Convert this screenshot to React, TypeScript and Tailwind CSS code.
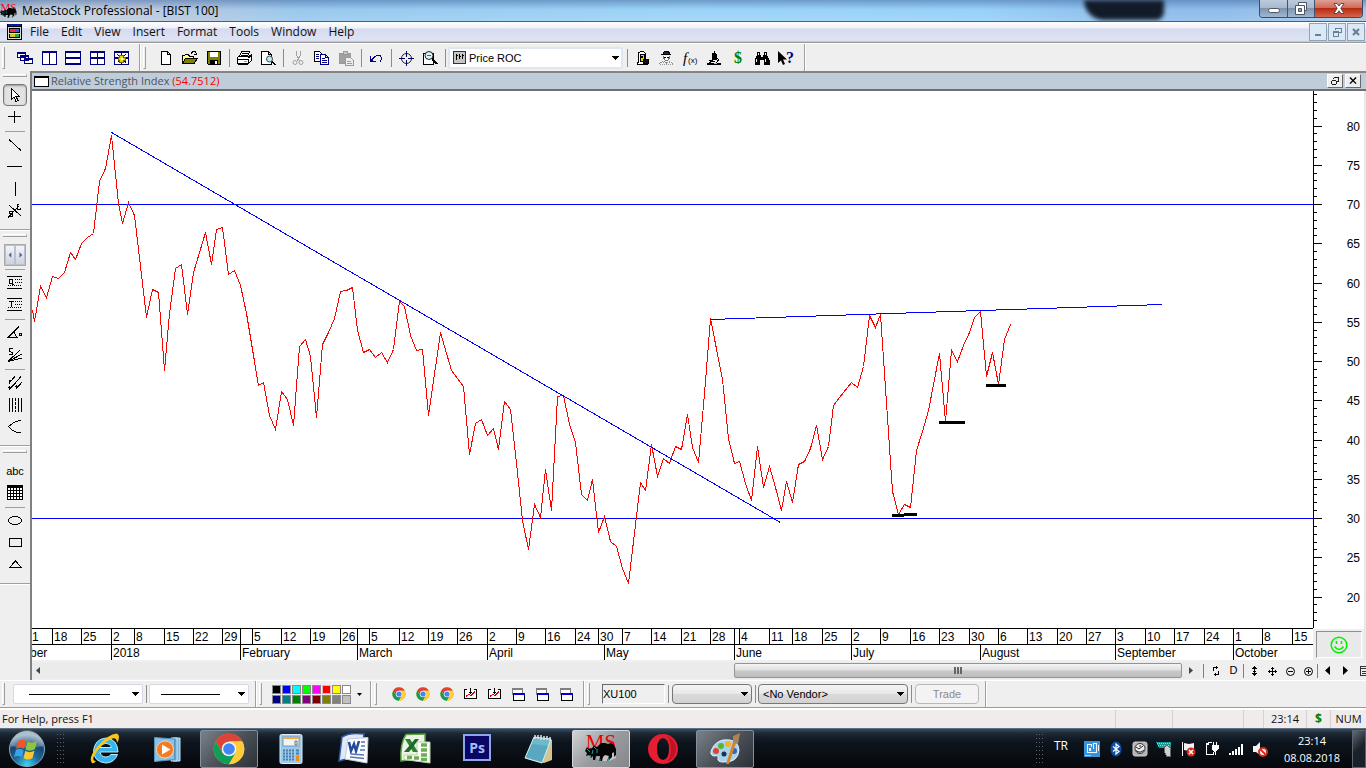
import type { ReactNode } from "react";
import clsx from "clsx";

const RSI_POINTS =
    "32,310 34,321 40,286 46,297 52,276 58,278 64,272 70,252 75,259 81,243 87,237 93,233 99,181 105,168 111,135 118,203 122,223 128,202 134,215 146,317 152,289 158,292 164,370 169,313 175,268 181,264 187,314 193,272 205,232 211,264 216,229 222,227 228,274 234,270 240,285 246,313 258,385 263,382 269,415 275,429 281,391 287,399 293,425 299,346 305,339 310,356 316,417 322,344 328,332 334,318 340,291 346,290 352,287 357,330 363,352 369,349 375,357 381,352 387,362 393,349 399,301 404,306 410,335 416,350 422,349 428,415 440,332 451,370 457,378 463,386 469,454 475,423 481,419 487,435 493,428 498,449 504,401 510,409 516,463 522,520 528,549 534,504 540,517 545,469 551,510 557,396 563,395 569,424 575,442 581,494 587,500 592,479 598,532 604,516 610,541 616,546 622,568 628,583 640,482 645,490 651,444 657,476 663,458 669,463 675,446 681,449 687,414 692,447 698,462 704,393 710,318 722,379 728,438 734,463 739,461 745,483 751,500 757,446 763,487 769,466 775,487 781,510 786,481 792,502 798,464 804,461 810,448 816,425 822,459 828,446 833,405 839,397 851,382 857,387 863,366 869,315 875,327 880,314 892,491 898,514 904,504 910,507 916,450 922,431 928,410 939,353 945,421 951,350 957,361 963,345 969,332 974,317 980,311 986,376 992,352 998,384 1004,339 1010,324";

const DAYS: [number, string][] = [
    [52, "18"], [81, "25"], [111, "2"], [134, "8"], [164, "15"], [193, "22"], [222, "29"], [240, ""], [252, "5"],
    [281, "12"], [310, "19"], [340, "26"], [357, ""], [369, "5"], [399, "12"], [428, "19"], [457, "26"], [487, "2"],
    [516, "9"], [545, "16"], [575, "24"], [598, "30"], [622, "7"], [651, "14"], [681, "21"], [710, "28"], [734, ""],
    [739, "4"], [769, "11"], [792, "18"], [822, "25"], [851, "2"], [880, "9"], [910, "16"], [939, "23"], [969, "30"],
    [998, "6"], [1027, "13"], [1057, "20"], [1086, "27"], [1115, "3"], [1145, "10"], [1174, "17"], [1204, "24"],
    [1233, "1"], [1262, "8"], [1292, "15"],
];

const MONTHS: [number, string][] = [
    [111, "2018"], [240, "February"], [357, "March"], [487, "April"], [604, "May"], [734, "June"], [851, "July"],
    [980, "August"], [1115, "September"], [1233, "October"],
];

const MENUS = ["File", "Edit", "View", "Insert", "Format", "Tools", "Window", "Help"];

const SWATCHES = [
    "#000000", "#0000ff", "#00ffff", "#00ff00", "#ff00ff", "#ff0000", "#ffff00", "#ffffff",
    "#000080", "#008080", "#008000", "#800080", "#800000", "#808000", "#808080", "#c0c0c0",
];

const ui = "font-['Open_Sans','Noto_Sans',sans-serif]";
const arial = "font-['Liberation_Sans',Arial,sans-serif]";

/** 16x16 canvas for the small toolbar drawings. */
function Ico({ children, stroke = "#000", smooth = false }: { children: ReactNode; stroke?: string; smooth?: boolean }) {
    return (
        <svg width="16" height="16" viewBox="0 0 16 16" fill="none" stroke={stroke} shapeRendering={smooth ? "auto" : "crispEdges"} aria-hidden="true">
            {children}
        </svg>
    );
}

function Tool({ label, children, className }: { label: string; children: ReactNode; className?: string }) {
    return (
        <button type="button" aria-label={label} className={clsx("flex h-[22px] w-6 shrink-0 items-center justify-center", className)}>
            {children}
        </button>
    );
}

function Sep() {
    return (
        <span className="flex w-1.5 shrink-0 justify-center">
            <span className="h-[18px] w-px bg-[#8c8c8c]" />
        </span>
    );
}

function Grip({ className }: { className?: string }) {
    return <span className={clsx("h-[22px] w-[3px] shrink-0 border-r border-b border-l border-l-white border-r-[#a0a0a0] border-b-[#a0a0a0]", className)} />;
}

function Divider({ className }: { className?: string }) {
    return <span className={clsx("w-0.5 shrink-0 self-stretch border-r border-l border-l-[#a0a0a0] border-r-white", className)} />;
}

function Caret({ className }: { className?: string }) {
    return (
        <svg width="7" height="4" viewBox="0 0 7 4" className={clsx("pointer-events-none", className)} shapeRendering="crispEdges">
            <path d="M0 0H7V1H6V2H5V3H4V4H3V3H2V2H1V1H0Z" fill="#000" />
        </svg>
    );
}

/* ---------- coloured artwork ---------- */

function Chrome({ size }: { size: number }) {
    return (
        <svg width={size} height={size} viewBox="0 0 48 48" aria-hidden="true">
            <circle cx="24" cy="24" r="23" fill="#fbcc34" />
            <path d="M4 12.500A23 23 0 0 1 44 12.500H24L14 29.500Z" fill="#db4437" />
            <path d="M4.100 12.500A23 23 0 0 0 24 47L34 29.500L14 29.500Z" fill="#0f9d58" />
            <path d="M24 13H44.200A23 23 0 0 1 24 47L34 30Z" fill="#fdcd3c" />
            <circle cx="24" cy="24" r="11" fill="#f4f4f4" />
            <circle cx="24" cy="24" r="8.700" fill="#4285f4" />
        </svg>
    );
}

function Bull({ width, height }: { width: number; height: number }) {
    return (
        <svg width={width} height={height} viewBox="0 -5 32 37" aria-hidden="true">
            <text x="16" y="14" textAnchor="middle" fontFamily="Liberation Serif, serif" fontSize="21" fill="#f00000">MS</text>
            <path d="M12 23L20 19L31 18L31 23L24 26H15Z" fill="#c4c4c4" />
            <path d="M0 16L2 12L4 14L7 13L9 11L12 12L16 8L20 8L23 9L26 8L29 10L31 14L31 20L29 22L29 17L27 18L27 22L24 25L22 26L24 21L20 20L18 22L17 26L14 26L15 21L11 21L10 25L8 25L8 21L6 23L4 20L1 21L2 18Z" fill="#050505" />
            <path d="M2 14L5 17M8 15L7 19M12 14V18M5 20L6 23M15 24V26M24 23L23 26M9 12L11 14" stroke="#18a0a4" strokeWidth="1" fill="none" />
        </svg>
    );
}

function StartOrb() {
    return (
        <svg width="40" height="40" viewBox="0 0 40 40" aria-hidden="true">
            <defs>
                <radialGradient id="orb" cx="50%" cy="95%" r="85%">
                    <stop offset="0" stopColor="#3fd4f4" />
                    <stop offset=".4" stopColor="#1d6c9c" />
                    <stop offset=".75" stopColor="#17456f" />
                    <stop offset="1" stopColor="#8aa9bd" />
                </radialGradient>
            </defs>
            <circle cx="20" cy="20" r="18.500" fill="#17222c" />
            <circle cx="20" cy="20" r="17.500" fill="url(#orb)" stroke="#84a7bb" />
            <path d="M4 17A16 16 0 0 1 36 17Q20 20 4 17Z" fill="#fff" opacity=".28" />
            <path d="M11 13Q15 9 19 12L17 20Q13 17 9 20Z" fill="#f0562a" />
            <path d="M20.500 12.500Q25 15 30 12L28 20Q23 23 18.500 20.500Z" fill="#8cc63f" />
            <path d="M9 21Q13 18.500 16.500 21.500L15 28Q11 26 7 28Z" fill="#38a4e8" />
            <path d="M18.300 22Q23 24.500 27.500 21.500L25.500 29Q21 32 16.500 29Z" fill="#fdc82f" />
        </svg>
    );
}

function ExplorerIcon() {
    return (
        <svg width="32" height="32" viewBox="0 0 32 32" aria-hidden="true">
            <path d="M29 19H11Q12 24 17 24Q20 24 22 21.500H28.500Q25 30 17 30Q4.500 29 4.500 17.500Q6 6 17 5Q28.500 6 29 19ZM11 14.500H22.500Q21.500 10.500 17 10.300Q12 10.500 11 14.500Z" fill="#39b5ee" stroke="#b5ecff" strokeWidth="1" />
            <path d="M3 30Q-1 25 8 14Q19 1 28 .5Q32 3 28 10Q28 3.500 22 6Q12 11 5 23Q3 28 7 28Q4.500 31 3 30Z" fill="#fbc617" />
        </svg>
    );
}

function MediaIcon() {
    return (
        <svg width="32" height="32" viewBox="0 0 32 32" aria-hidden="true">
            <path d="M22 5H29V28H22Z" fill="#7fb9df" stroke="#c9e6f7" />
            <path d="M20 5H26V28H20Z" fill="#5da6d5" stroke="#c9e6f7" />
            <path d="M3.500 4.500L23.500 6V26.500L3.500 28.500Z" fill="#86c3e6" stroke="#5a93b8" />
            <circle cx="14" cy="16.500" r="8.500" fill="#f47b20" stroke="#fbd0a8" />
            <path d="M11 11.500L19.500 16.500L11 21.500Z" fill="#fff" />
        </svg>
    );
}

function CalcIcon() {
    return (
        <svg width="32" height="32" viewBox="0 0 32 32" aria-hidden="true">
            <rect x="5" y="1.500" width="22" height="29" rx="1.500" fill="#9cc9e8" stroke="#dceffa" />
            <rect x="8" y="4" width="16" height="9" fill="#f3f5f2" stroke="#6d9cc0" />
            <rect x="8" y="4" width="16" height="2" fill="#f5a54a" />
            <path d="M20 8H22V12H20Z" stroke="#555" fill="none" strokeWidth=".8" />
            <path d="M8 17.500H20M8 20.500H20M8 23.500H20M8 26.500H20" stroke="#477fab" strokeWidth="2" strokeDasharray="2 1" />
            <path d="M21 17.500H24M21 20.500H24" stroke="#477fab" strokeWidth="2" />
            <path d="M22.500 22.500V28" stroke="#f08a1c" strokeWidth="3" />
        </svg>
    );
}

function WordIcon() {
    return (
        <svg width="32" height="32" viewBox="0 0 32 32" aria-hidden="true">
            <path d="M5 4Q13 -1 27 1L24 25Q10 25 2 28Z" fill="#dfe9f8" stroke="#2f58a4" strokeWidth="1.500" />
            <path d="M11 6L31 4.500L30 30L8 26Z" fill="#fdfdfd" stroke="#bccbe0" />
            <path d="M12 9L14 18L17 11L19 18L22 8" fill="none" stroke="#244a9b" strokeWidth="2.500" />
            <path d="M24 9H28M24 13H28M23 17H28M14 21L27 22M13 24L27 25.500" stroke="#5276b8" strokeWidth="1.600" />
        </svg>
    );
}

function ExcelIcon() {
    return (
        <svg width="32" height="32" viewBox="0 0 32 32" aria-hidden="true">
            <path d="M7 1.500L26 1V25L2 28Q1 10 7 1.500Z" fill="#e9f5e2" stroke="#58a441" strokeWidth="1.500" />
            <path d="M18 9H31V30L5 26.500V22H18Z" fill="#fcfff8" stroke="#b9d3ae" />
            <path d="M22 12H28M22 17H28M22 22H28M8 24.500H13M15 25H20M22 26.500H28" stroke="#6cad56" strokeWidth="3.500" />
            <path d="M6 6H11L19 19H14Z" fill="#2f8138" />
            <path d="M16 6H20L10 19H5Z" fill="#1f6a2b" />
        </svg>
    );
}

function PhotoshopIcon() {
    return (
        <svg width="32" height="32" viewBox="0 0 32 32" aria-hidden="true">
            <rect x="3" y="2" width="26" height="25" fill="#0b0663" stroke="#8ea5ea" strokeWidth="2" />
            <text x="16" y="20" textAnchor="middle" fontFamily="Open Sans, sans-serif" fontWeight="700" fontSize="14" fill="#a3bdf7">Ps</text>
        </svg>
    );
}

function NotepadIcon() {
    return (
        <svg width="32" height="32" viewBox="0 0 32 32" aria-hidden="true">
            <path d="M12 4L29 7V27L21 30L3 25Z" fill="#d2c690" />
            <path d="M11 4L28 6L19 30L2 25Z" fill="#6eb9cc" stroke="#ddf3f8" />
            <path d="M9 11L25 13L19 29L3 24Z" fill="#3c94b2" opacity=".45" />
            <path d="M12 2V6M15 2V6M18 2V7M21 3V7M24 3V7M27 4V8" stroke="#e0e0e0" strokeWidth="1.500" />
        </svg>
    );
}

function OperaIcon() {
    return (
        <svg width="32" height="32" viewBox="0 0 32 32" aria-hidden="true">
            <path fillRule="evenodd" d="M16 1A15 15 0 1 0 16 31A15 15 0 1 0 16 1ZM16 5Q22 6 22 16Q22 26 16 27Q10 26 10 16Q10 6 16 5Z" fill="#e71d32" />
            <path d="M20 3Q29 7 29 16Q29 25 20 29Q24 24 24 16Q24 8 20 3Z" fill="#a70c1d" opacity=".6" />
        </svg>
    );
}

function PaintIcon() {
    return (
        <svg width="32" height="32" viewBox="0 0 32 32" aria-hidden="true">
            <path d="M14 7Q29 5 30 17Q29 30 14 29Q8 29 9 25Q10 22 5 23Q0 22 3 16Q6 9 14 7Z" fill="#a9d3ec" stroke="#e2f3fc" />
            <circle cx="7" cy="18" r="3" fill="#e0442a" />
            <circle cx="12" cy="13" r="3" fill="#5cb531" />
            <circle cx="19" cy="11" r="3" fill="#f3b229" />
            <circle cx="15" cy="21" r="2.500" fill="#17344e" />
            <circle cx="25" cy="18" r="3" fill="#2d66c6" />
            <path d="M24 9L27 10L20 31L17 31Z" fill="#d98426" />
            <path d="M24 3L31 0L29 11L24 10Z" fill="#a98458" />
        </svg>
    );
}

/* ---------- chrome of the window ---------- */

function TitleBar() {
    return (
        <header className="relative flex h-[22px] shrink-0 items-stretch overflow-hidden border-b border-[#4c5f78] bg-[linear-gradient(180deg,rgba(70,110,165,.55)_0,rgba(160,205,240,0)_45%,rgba(255,255,255,.12)_100%),linear-gradient(90deg,#aebfd2_0,#c9d2df_4%,#b4c7df_14%,#98c8ee_22%,#9bd3f7_50%,#97d0f8_72%,#8dbdec_82%,#8fbcea_90%,#a9c8e8_100%)]">
            <span className="absolute top-0 right-[202px] h-5 w-[80px] rounded-bl-[20px] rounded-br-lg bg-[#121c28] blur-[2px]" />
            <div className="flex items-center">
                <span className="w-[17px]"><Bull width={17} height={20} /></span>
                <h1 className="ml-1 pl-px text-xs text-black">MetaStock Professional - [BIST 100]</h1>
            </div>
            <div className="relative mr-[3px] ml-auto flex h-[18px] overflow-hidden rounded-b border border-t-0 border-[#384c66]">
                <button type="button" aria-label="Minimize" className="flex w-[28px] items-end justify-center border-r border-[#42536b] bg-[linear-gradient(#bccbdc,#a8b9cd_45%,#8094ae_50%,#9eb8d2)] pb-1">
                    <span className="h-[5px] w-3 rounded-sm border border-[#4d5563] bg-white" />
                </button>
                <button type="button" aria-label="Restore" className="flex w-[27px] items-center justify-center border-r border-[#42536b] bg-[linear-gradient(#bccbdc,#a8b9cd_45%,#8094ae_50%,#9eb8d2)]">
                    <svg width="13" height="13" viewBox="0 0 13 13" fill="#fff" stroke="#4d5563">
                        <path d="M3.500 .5H11.500V8.500H3.500Z" />
                        <path d="M.5 3.500H9.500V12.500H.5Z" />
                        <path d="M3.500 6.500H6.500V9.500H3.500Z" fill="#8fa3bb" />
                    </svg>
                </button>
                <button type="button" aria-label="Close" className="flex w-[47px] items-center justify-center bg-[linear-gradient(#dda094,#cf6b58_45%,#ba2a11_50%,#d2664c)]">
                    <svg width="12" height="11" viewBox="0 0 12 11">
                        <path d="M1 .5H4L6 3L8 .5H11L7.800 5.300L11 10.500H8L6 7.700L4 10.500H1L4.200 5.300Z" fill="#fff" stroke="#4d3f4a" strokeWidth=".9" />
                    </svg>
                </button>
            </div>
        </header>
    );
}

function MenuBar() {
    const box = "flex h-[18px] w-[18px] items-center justify-center border border-[#8da3ba] bg-[#dbe8f6]";
    return (
        <nav className="flex h-[21px] shrink-0 items-center border-b border-[#9a9a9a] bg-[linear-gradient(#ffffff_0,#eef0f8_30%,#d5daee_35%,#dfe4f5_92%,#b4bdd2_100%)] pl-[7px] text-xs text-[#111]">
            <svg width="15" height="16" viewBox="0 0 15 16" shapeRendering="crispEdges" aria-hidden="true">
                <rect width="15" height="16" fill="#000" />
                <rect x="1" y="0" width="13" height="2" fill="#0a1e9a" />
                <rect x="1" y="3" width="13" height="12" fill="#d8d8d8" />
                <rect x="2" y="4" width="11" height="5" fill="#000" />
                <rect x="3" y="5" width="5" height="3" fill="#f0285a" />
                <rect x="8" y="5" width="4" height="3" fill="#3b58f0" />
                <rect x="2" y="10" width="11" height="4" fill="#000" />
                <rect x="3" y="10" width="5" height="3" fill="#d4c820" />
                <rect x="8" y="10" width="4" height="3" fill="#2ba83a" />
            </svg>
            <div className="ml-2 flex gap-3">
                {MENUS.map((m) => (
                    <button key={m} type="button">{m}</button>
                ))}
            </div>
            <div className="mr-px ml-auto flex gap-px">
                <button type="button" aria-label="Minimize chart" className={box}>
                    <Ico stroke="#6b7f96"><path d="M5 11H11" strokeWidth="2" /></Ico>
                </button>
                <button type="button" aria-label="Restore chart" className={box}>
                    <Ico stroke="#6b7f96"><path d="M6.500 6V4.500H12.500V8.500H10M6 4H13M4.500 7.500H9.500V12.500H4.500ZM4 8.500H10" /></Ico>
                </button>
                <button type="button" aria-label="Close chart" className={box}>
                    <Ico stroke="#6b7f96" smooth><path d="M5 5L11 11M11 5L5 11" strokeWidth="2.200" /></Ico>
                </button>
            </div>
        </nav>
    );
}

function MainToolbar() {
    return (
        <div role="toolbar" aria-label="Standard" className="flex h-7 shrink-0 items-center border-t border-white bg-[#efefef]">
            <Grip className="ml-0.5" />
            <div className="ml-2 flex items-center">
                <Tool label="Cascade">
                    <Ico stroke="#000080"><path fill="#fff" d="M.5 2.500H8.500V7.500H.5ZM3.500 5.500H11.500V10.500H3.500ZM7.500 8.500H15.500V13.500H7.500Z" /><path d="M0 3H9M3 6H12M7 9H16" strokeWidth="2" /></Ico>
                </Tool>
                <Tool label="Tile columns">
                    <Ico stroke="#000080"><path fill="#fff" d="M1.500 1.500H15.500V14.500H1.500ZM8.500 2V14" /><path d="M1 2H16" strokeWidth="2" /></Ico>
                </Tool>
                <Tool label="Tile rows">
                    <Ico stroke="#000080"><path fill="#fff" d="M.5 1.500H15.500V14.500H.5Z" /><path d="M0 2H16M0 8H16" strokeWidth="2" /><path d="M0 13.500H16" /></Ico>
                </Tool>
                <Tool label="Tile grid">
                    <Ico stroke="#000080"><path fill="#fff" d="M1.500 1.500H15.500V14.500H1.500ZM8.500 2V14" /><path d="M1 2H16M1 8H16" strokeWidth="2" /></Ico>
                </Tool>
                <Tool label="Layout options">
                    <Ico stroke="#000080"><path fill="#fff" d="M1.500 1.500H15.500V14.500H1.500Z" /><path d="M1 2H16M1 8H16" strokeWidth="2" /><path d="M8.500 3V14M4.500 4.500L13 12.500M12.500 4.500L4.500 12.500M4 8.500H14" stroke="#000" /><path d="M6.500 5.500H10.500V7H12V10H10.500V12H6.500V10H5V7H6.500Z" fill="#e4d800" stroke="#6e6600" /><path d="M7.500 8.500H9.500" stroke="#fff" strokeWidth="2" /></Ico>
                </Tool>
            </div>
            <Divider className="ml-1.5" />
            <Grip className="ml-0.5" />
            <div className="ml-2 flex items-center">
                <Tool label="New">
                    <Ico><path fill="#fff" d="M3.500 1.500H9.500L12.500 4.500V14.500H3.500ZM9.500 1.500V4.500H12.500" /></Ico>
                </Tool>
                <Tool label="Open">
                    <Ico><path d="M.5 13.500V5.500H2.500L3.500 4.500H6.500L7.500 6.500H11.500V8.500" fill="#ffff80" /><path d="M.5 13.500L3.500 8.500H15.500L12 13.500Z" fill="#808000" /><path d="M9 3.500L11 1.500H13L14.500 3.500V5M12 4.500H15" /></Ico>
                </Tool>
                <Tool label="Save">
                    <Ico><path d="M1.500 1.500H14.500V14.500H2.500L1.500 13.500Z" fill="#808000" /><path d="M4 2H12V7H4Z" fill="#fff" stroke="none" /><path d="M4 9.500H12V14H4Z" fill="#000" stroke="none" /><path d="M9 10.500H11V13.500H9Z" fill="#fff" stroke="none" /></Ico>
                </Tool>
                <Sep />
                <Tool label="Print">
                    <Ico><path fill="#fff" d="M5.500 1.500H13.500L11.500 6.500H3.500ZM1.500 7.500L3.500 6H13.500L15.500 5V10.500L12.500 13.500H1.500Z" /><path d="M6 3.500H12M5 5H11M1 9.500H13M12.500 8L15 6M12.500 13V9M2 14.500H12" /><path d="M8 11.500H11" stroke="#b8a800" /></Ico>
                </Tool>
                <Tool label="Print preview">
                    <Ico><path fill="#fff" d="M1.500 1.500H8.500L11.500 4.500V14.500H1.500ZM8.500 1.500V4.500H11.500" /><circle cx="9.500" cy="9" r="3" fill="#b9ecf4" stroke="#444" shapeRendering="auto" /><path d="M12 11.500L15.500 15" strokeWidth="2" /></Ico>
                </Tool>
                <Sep />
                <Tool label="Cut">
                    <Ico stroke="#a0a0a0"><path d="M6.500 1V5L9.500 11M10.500 1V5L7 11" /><circle cx="5" cy="12.500" r="2" shapeRendering="auto" /><circle cx="11" cy="12.500" r="2" shapeRendering="auto" /></Ico>
                </Tool>
                <Tool label="Copy">
                    <Ico stroke="#000080"><path fill="#fff" stroke="#000" d="M.5 1.500H5.500L8.500 4.500V11.500H.5Z" /><path fill="#fff" d="M6.500 4.500H11.500L14.500 7.500V14.500H6.500ZM11.500 4.500V7.500H14.500" /><path d="M8 8.500H11M8 10.500H13M8 12.500H13M2 4.500H5M2 6.500H5M2 8.500H5" /></Ico>
                </Tool>
                <Tool label="Paste">
                    <Ico stroke="#9a9a9a"><path d="M1.500 3.500H12.500V13.500H1.500Z" fill="#a0a0a0" /><path d="M5 1.500H9V4.500H5Z" fill="#c8c8c8" /><path d="M7.500 7.500H12.500L15.500 10.500V15.500H7.500Z" fill="#eee" /><path d="M9 11.500H13M9 13.500H14" /></Ico>
                </Tool>
                <Sep />
                <Tool label="Undo">
                    <Ico stroke="#000080"><path d="M2.500 6V11.500H7.500M3 10.500L7 6.500L9 5.500H12L13.500 7.500V9.500L12 11.500" /><path d="M2 8L6 12H2Z" fill="#000080" stroke="none" /></Ico>
                </Tool>
                <Sep />
                <Tool label="Crosshair">
                    <Ico stroke="#000060"><circle cx="8.500" cy="8.500" r="5" stroke="#222" shapeRendering="auto" /><path d="M8.500 1V7M8.500 10V16M1 8.500H7M10 8.500H16" /></Ico>
                </Tool>
                <Tool label="Zoom page">
                    <Ico><path fill="#fff" d="M1.500 3.500H11.500V14.500H1.500Z" /><circle cx="7" cy="5.500" r="4" fill="#d8f4f4" stroke="#222" shapeRendering="auto" /><path d="M5 5.500H9" stroke="#008080" /><path d="M10 8.500L15 14" strokeWidth="2" /></Ico>
                </Tool>
                <Sep />
            </div>
            <div className="relative mr-px flex items-center">
                <select aria-label="Indicator" className={clsx("h-[22px] w-[175px] appearance-none rounded-xs border-2 border-[#e0e6f0] bg-white pl-[19px] text-[11px] leading-4", arial)}>
                    <option>Price ROC</option>
                </select>
                <svg className="pointer-events-none absolute left-[5px]" width="13" height="13" viewBox="0 0 13 13" shapeRendering="crispEdges">
                    <path d="M.5 .5H12.500V12.500H.5Z" fill="#c6c6c6" stroke="#333" />
                    <path d="M3.500 3V9M6.500 3V8M9.500 3V8M3 4.500H5M6 5.500H8M9 4.500H11" stroke="#000" />
                </svg>
                <Caret className="absolute right-1" />
            </div>
            <Sep />
            <div className="flex items-center">
                <Tool label="Expert advisor">
                    <Ico><path d="M4.500 12V3L6.500 1.500H9.500L11.500 3.500V10L13.500 12.500V14.500H3.500V12Z" fill="#fff" /><path d="M6 4H10V11H6Z" fill="#e8d800" stroke="#000" /><path d="M7 6.500H9" strokeWidth="2" /><path d="M9 9.500H14.500V13.500H9Z" fill="#111" /></Ico>
                </Tool>
                <Tool label="System tester">
                    <Ico><path d="M5.500 4V2.500L7 1.500H9.500L11.500 2.500V4M3 4.500H13" fill="#1c2550" /><path d="M5.500 6V8L7.500 10.500H9.500L11.500 8V6" fill="#fff" stroke="#777" /><path d="M6 7.500H8M9 7.500H11" /><path d="M1.500 14.500L2.500 12.500L6 11.500L8.500 13L11 11.500L14.500 12.500L15 14.500" stroke="#888" strokeDasharray="1 1" /><path d="M2 14.500H15M3 12.500H14" stroke="#999" strokeDasharray="1 1" /></Ico>
                </Tool>
                <Tool label="Indicator builder">
                    <svg width="16" height="18" viewBox="0 0 16 18" aria-hidden="true">
                        <text x="1" y="14" fontFamily="Liberation Serif, serif" fontStyle="italic" fontSize="15">f</text>
                        <text x="6" y="14" fontFamily="Liberation Sans, sans-serif" fontSize="8">(x)</text>
                    </svg>
                </Tool>
                <Tool label="Explorer">
                    <Ico><path d="M8.500 1V3M7 3.500H10L10.500 7V9.500H6.500V6Z" fill="#000" /><path d="M6.500 10L3.500 13M3 10.500H7M11.500 8L12.500 10L10 13M6 11.500H9" /><path d="M1 14H15" strokeWidth="2" /><path d="M8 13.500H11" stroke="#d8d000" /></Ico>
                </Tool>
                <Tool label="Quotes" className="text-base font-bold text-[#008000]">
                    <span className="font-['Liberation_Serif',serif] leading-4">$</span>
                </Tool>
                <Tool label="Find">
                    <Ico><path d="M3 2H6V5H7V7H9V5H10V2H13V5L15.500 10V14.500H10V10H6V14.500H.5V10L3 5Z" fill="#000" stroke="none" /><path d="M4.500 3V5M11.500 3V5M2.500 9V12M11.500 9V12" stroke="#eee" /></Ico>
                </Tool>
                <Tool label="Context help">
                    <svg width="18" height="16" viewBox="0 0 18 16" aria-hidden="true">
                        <path d="M1 1V13L4 10.500L6 15L8 14L6 9.500H10Z" fill="#000" />
                        <text x="9" y="13" fontFamily="Liberation Serif, serif" fontWeight="700" fontSize="16" fill="#000080">?</text>
                    </svg>
                </Tool>
            </div>
            <Divider className="ml-1.5" />
        </div>
    );
}

function ToolGroup({ children }: { children: ReactNode }) {
    return (
        <div className="w-full">
            <div className="flex h-[13px] justify-center pt-[3px]">
                <span className="h-[3px] w-6 border-t border-r border-b border-t-white border-r-[#a0a0a0] border-b-[#a0a0a0]" />
            </div>
            <div className="flex flex-col items-center pb-[7px]">{children}</div>
            <div className="h-0.5 border-t border-b border-t-[#a0a0a0] border-b-white" />
        </div>
    );
}

function HSep() {
    return (
        <span className="flex h-1.5 items-center">
            <span className="h-px w-5 bg-[#a0a0a0]" />
        </span>
    );
}

function DrawingTools() {
    return (
        <aside aria-label="Drawing tools" className="w-8 shrink-0 overflow-hidden border-r-2 border-[#808080] bg-[#efefef]">
            <ToolGroup>
                <Tool label="Pointer" className="rounded-sm border border-[#777] bg-[#e2e2e2] shadow-[inset_0_1px_2px_#999]">
                    <Ico><path d="M4.500 1.500V12.500L7 10L9 14.500L11 13.500L9 9.500H12.500Z" fill="#fff" /></Ico>
                </Tool>
                <Tool label="Crosshair pointer"><Ico><path d="M7.500 1.500V14M1 7.500H14" /></Ico></Tool>
                <HSep />
                <Tool label="Trendline"><Ico><path d="M2 2.500L14 13.500" /></Ico></Tool>
                <Tool label="Horizontal line"><Ico><path d="M0 7.500H15" /></Ico></Tool>
                <Tool label="Vertical line"><Ico><path d="M8.500 1V15" /></Ico></Tool>
                <Tool label="Stop loss">
                    <Ico><path d="M1 14.500L12 3M2 2L14 13" /><path d="M10.500 1V6.500H13.500V5M9.500 1.500H12M5.500 8.500H2.500V10.500H5.500V13.500H2" /></Ico>
                </Tool>
            </ToolGroup>
            <ToolGroup>
                <div className="flex h-[22px] w-[22px] items-center border border-[#aaa] bg-[#f4f4f4]">
                    {["M6 4L3 7L6 10Z", "M4 4L7 7L4 10Z"].map((d, i) => (
                        <button key={d} type="button" aria-label={i ? "Next tools" : "Previous tools"} className="flex h-5 w-2.5 items-center justify-center border border-[#bdc0ca] bg-[linear-gradient(#f5f5f8,#cfd1dc)]">
                            <svg width="9" height="14" viewBox="0 0 9 14"><path d={d} fill="#3e5f9d" /></svg>
                        </button>
                    ))}
                </div>
                <HSep />
                <Tool label="Quadrant lines">
                    <Ico><path d="M0 1.500H15M0 13.500H15M2.500 4.500H5.500V8.500H2.500ZM5 9.500H7" /><path d="M8 4.500H15M8 7.500H15M1 10.500H15" strokeDasharray="1 1" /></Ico>
                </Tool>
                <Tool label="Tirone levels">
                    <Ico><path d="M0 1.500H15M0 13.500H15M2 4.500H7M4.500 5V10" /><path d="M8 4.500H15M8 7.500H15M1 10.500H15" strokeDasharray="1 1" /></Ico>
                </Tool>
                <HSep />
                <Tool label="Gann angle">
                    <Ico><path d="M12 1.500L1 12.500H11M7 7L9.500 12M12.500 8.500H14.500V10.500H12.500Z" /></Ico>
                </Tool>
                <Tool label="Speed lines">
                    <Ico><path d="M1 14.500L13 3M1 14.500L15 7M1 14.500L15 11M5.500 1.500H2.500V4L5 5.500V7.500H2" /></Ico>
                </Tool>
                <HSep />
                <Tool label="Andrews pitchfork">
                    <Ico><path d="M3 7L8 1.500M3 14L14 1.500M10 13L15 7M2.500 5V9M5 5.500H2M2.500 11V15M1 12.500H4M8 11.500H11M9.500 10V14" /></Ico>
                </Tool>
                <Tool label="Time zones">
                    <Ico><path d="M2.500 1V15M5.500 1V15M11.500 1V15M14.500 1V15" /><path d="M8.500 1V15" strokeDasharray="3 1" /></Ico>
                </Tool>
                <Tool label="Fibonacci arcs"><Ico><path d="M14 1.500H12L6 4L1.500 7.500L5 11L10 13.500H14" /></Ico></Tool>
            </ToolGroup>
            <ToolGroup>
                <Tool label="Text" className={clsx("text-[11px]", arial)}>abc</Tool>
                <Tool label="Grid">
                    <Ico><path fill="#fff" d="M.5 .5H15.500V14.500H.5Z" /><path d="M0 1.500H16" strokeWidth="2" /><path d="M3.500 1V14M6.500 1V14M9.500 1V14M12.500 1V14M0 5.500H16M0 8.500H16M0 11.500H16" /></Ico>
                </Tool>
                <HSep />
                <Tool label="Ellipse"><Ico><ellipse cx="8" cy="7.500" rx="6.500" ry="4" /></Ico></Tool>
                <Tool label="Rectangle"><Ico><path d="M2.500 3.500H14.500V11.500H2.500Z" /></Ico></Tool>
                <Tool label="Triangle"><Ico><path d="M8.500 4L2.500 10.500H14.500Z" /></Ico></Tool>
            </ToolGroup>
        </aside>
    );
}

/* ---------- chart ---------- */

function scaleY(v: number) {
    return Math.round(518 - (v - 30) * 7.85);
}

function Chart() {
    const values = Array.from({ length: 69 }, (_, i) => 16 + i);
    return (
        <div className={clsx("flex min-h-0 flex-1 bg-white text-xs", arial)}>
            <div className="flex min-w-0 flex-1 flex-col">

                {/* Plot of the indicator with its trendlines. */}
                <svg className="block min-h-0 w-full flex-1" role="img" aria-label="Relative Strength Index" shapeRendering="crispEdges">
                    <path d="M0 113.500H2000M0 427.500H2000" stroke="#0000ff" />
                    <g transform="translate(-31.5 -90.5)" fill="none">
                        <polyline points={RSI_POINTS} stroke="#ff0000" />
                        <path d="M111 132L780 522M710 319L1162 304" stroke="#0000ff" />
                    </g>
                    <path d="M860 424.500H872M872 423.500H885M907 331.500H933M954 294.500H974" stroke="#000" strokeWidth="3" />
                </svg>

                {/* Date axis. */}
                <svg className="block h-8 w-full shrink-0" shapeRendering="crispEdges">
                    <path d="M0 .5H2000M0 16.500H2000" stroke="#000" />
                    <text x="0" y="13">1</text>
                    <text x="-2" y="29">ber</text>
                    {DAYS.map(([x, d]) => (
                        <g key={x}>
                            <path d={`M${x - 31.5} 0V16`} stroke="#000" />
                            <text x={x - 30} y="13">{d}</text>
                        </g>
                    ))}
                    {MONTHS.map(([x, m]) => (
                        <g key={x}>
                            <path d={`M${x - 31.5} 16V32`} stroke="#000" />
                            <text x={x - 30} y="29">{m}</text>
                        </g>
                    ))}
                </svg>
            </div>

            <div className="flex w-[53px] shrink-0 flex-col border-r-2 border-[#e8e8e8]">
                <svg className="block min-h-0 w-full flex-1" shapeRendering="crispEdges">
                    <path d="M.5 0V538" stroke="#000" />
                    {values.map((v) => (
                        <g key={v}>
                            <path d={`M1 ${scaleY(v) - 90.5}H${v % 5 ? 4 : 9}`} stroke="#000" />
                            {v % 5 === 0 && <text x="47" y={scaleY(v) - 86} textAnchor="end">{v}</text>}
                        </g>
                    ))}
                </svg>
                <div className="flex h-8 shrink-0 items-center justify-center border-t border-white bg-[#efefef]">
                    <button type="button" aria-label="Smiley" className="flex h-[27px] w-[46px] items-center justify-center border border-t-[#8f8f8f] border-r-white border-b-white border-l-[#8f8f8f] bg-[#e9e9e9]">
                        <svg width="18" height="18" viewBox="0 0 18 18" fill="none" stroke="#00f000" strokeWidth="1.500">
                            <circle cx="9" cy="9" r="7.800" />
                            <path d="M4.500 10.500Q9 16.500 13.500 10.500M6.500 5V8M11.500 5V8" />
                        </svg>
                    </button>
                </div>
            </div>
        </div>
    );
}

function VSep() {
    return <span className="h-3.5 w-px shrink-0 bg-[#808080]" />;
}

function ScrollRow() {
    const btn = "flex h-4 w-[17px] shrink-0 items-center justify-center";
    return (
        <div className="flex h-5 shrink-0 items-center overflow-hidden bg-[#efefef] pt-px">
            <div className="flex h-[17px] flex-1 items-center bg-[#ebebeb]">
                <button type="button" aria-label="Scroll left" className="flex w-3 justify-center">
                    <svg width="4" height="7" viewBox="0 0 4 7"><path d="M4 0V7L0 3.500Z" fill="#444" /></svg>
                </button>
                <span className="flex-[692]" />
                <button type="button" aria-label="Scroll position" className="flex h-[15px] flex-[448] items-center justify-center gap-px rounded-xs border border-[#949494] bg-[linear-gradient(#f4f4f4,#dedede_48%,#c9c9c9_52%,#bdbdbd)]">
                    <span className="h-[7px] w-0.5 bg-[#666]" />
                    <span className="h-[7px] w-0.5 bg-[#666]" />
                    <span className="h-[7px] w-0.5 bg-[#666]" />
                </button>
                <button type="button" aria-label="Scroll right" className="flex h-4 w-[18px] items-center justify-center">
                    <svg width="4" height="7" viewBox="0 0 4 7"><path d="M0 0V7L4 3.500Z" fill="#444" /></svg>
                </button>
            </div>
            <div className="ml-[3px] flex w-[163px] items-center gap-px">
                <VSep />
                <button type="button" aria-label="Refresh" className={clsx(btn, "ml-0.5")}>
                    <Ico><path d="M5.500 8V4.500H10M8.500 3V6M10.500 8V11.500H6M7.500 10V13" /></Ico>
                </button>
                <button type="button" aria-label="Daily" className={clsx(btn, "text-[11px]", arial)}>D</button>
                <VSep />
                <button type="button" aria-label="Vertical scale" className={btn}>
                    <Ico><path d="M8.500 3V13M7 4.500H10M6 5.500H11M7 11.500H10M6 10.500H11M7 8.500H10" /></Ico>
                </button>
                <button type="button" aria-label="Pan" className={btn}>
                    <Ico><path d="M8.500 4V13M4 8.500H13M7 5.500H10M7 11.500H10M5.500 7V10M11.500 7V10" /></Ico>
                </button>
                <button type="button" aria-label="Zoom out" className={btn}>
                    <Ico smooth><circle cx="8.500" cy="8.500" r="4" /><path d="M6 8.500H11" /></Ico>
                </button>
                <button type="button" aria-label="Zoom in" className={btn}>
                    <Ico smooth><circle cx="8.500" cy="8.500" r="4" /><path d="M6 8.500H11M8.500 6V11" /></Ico>
                </button>
                <VSep />
                <button type="button" aria-label="Previous" className={btn}>
                    <svg width="5" height="9" viewBox="0 0 5 9"><path d="M5 0V9L0 4.500Z" /></svg>
                </button>
                <button type="button" aria-label="Next" className={btn}>
                    <svg width="5" height="9" viewBox="0 0 5 9"><path d="M0 0V9L5 4.500Z" /></svg>
                </button>
                <button type="button" aria-label="Security list" className={btn}>
                    <Ico stroke="#333"><path d="M4.500 3.500H15.500V12.500H4.500ZM4 5.500H16M6 8.500H14M6 10.500H14" /></Ico>
                </button>
            </div>
        </div>
    );
}

function ChartWindow() {
    const box = "flex h-[14px] w-4 items-center justify-center border border-t-white border-r-[#696969] border-b-[#696969] border-l-white bg-[#efefef]";
    return (
        <section className="flex min-w-0 flex-1 flex-col">
            <div className="flex h-5 shrink-0 items-center border-t-2 border-b-2 border-t-[#858585] border-b-[#6f6f6f] bg-[#bfccda] pr-[5px] pl-0.5">
                <span className="h-[11px] w-[15px] border border-t-2 border-black bg-white" />
                <h2 className="ml-0.5 text-[11px] leading-4 text-[#4c5560]">
                    Relative Strength Index <span className="text-[#ff0000]">(54.7512)</span>
                </h2>
                <div className="ml-auto flex gap-0.5">
                    <button type="button" aria-label="Restore pane" className={box}>
                        <Ico><path d="M6.500 6V4.500H12.500V8.500H10M4.500 7.500H9.500V11.500H4.500Z" /></Ico>
                    </button>
                    <button type="button" aria-label="Close pane" className={box}>
                        <Ico smooth><path d="M4.500 4L11.500 11M11.500 4L4.500 11" strokeWidth="1.600" /></Ico>
                    </button>
                </div>
            </div>
            <Chart />
            <ScrollRow />
        </section>
    );
}

/* ---------- bottom bars ---------- */

function LineSelect({ label, className, line }: { label: string; className: string; line: string }) {
    return (
        <div className={clsx("relative flex items-center", className)}>
            <select aria-label={label} className="h-5 w-full appearance-none rounded-xs border border-[#d5dae4] bg-white">
                <option aria-label="Solid" value="solid" />
            </select>
            <span className={clsx("pointer-events-none absolute h-px bg-black", line)} />
            <Caret className="absolute right-1" />
        </div>
    );
}

function DownloadIcon() {
    return (
        <Ico><path d="M4 3.500H1.500V12.500H13.500V3.500H11" fill="#fff" /><path d="M7.500 2V8M6 6.500H9" /><path d="M3 10.500L6 8L8 9.500L12 5.500" stroke="#e00000" /></Ico>
    );
}

function WindowIcon() {
    return (
        <Ico><path d="M1.500 2.500H11.500V8H1.500Z" fill="#fff" stroke="#808080" /><path d="M1 3H12" stroke="#808080" strokeWidth="2" /><path d="M2.500 7.500H13.500V14.500H2.500Z" fill="#fff" /><path d="M2 8H14" stroke="#0000e0" strokeWidth="2" /></Ico>
    );
}

function BottomToolbar() {
    const drop = "h-5 w-full appearance-none rounded-sm border border-[#777] bg-[linear-gradient(#f4f4f4,#e8e8e8_48%,#dadada_52%,#d2d2d2)] pl-1 text-[11px] leading-4";
    return (
        <div role="toolbar" aria-label="Formatting" className="flex h-7 shrink-0 items-center border-t border-t-white border-b border-b-[#9a9a9a] bg-[#efefef]">
            <Grip className="ml-0.5" />
            <LineSelect label="Line style" className="ml-2 w-[130px]" line="left-4 w-[81px]" />
            <Sep />
            <LineSelect label="Line weight" className="w-[100px]" line="left-3 w-[59px]" />
            <Divider className="ml-1.5" />
            <Grip className="ml-0.5" />
            <div className="ml-2.5 grid grid-cols-8 gap-px">
                {SWATCHES.map((c) => (
                    <button
                        key={c}
                        type="button"
                        aria-label={c}
                        className={clsx("h-[9px] w-[9px] border", c === "#ff0000" ? "border-[#e9b4b4]" : "border-[#8a8a8a]")}
                        style={{ backgroundColor: c }}
                    />
                ))}
            </div>
            <button type="button" aria-label="More colors" className="ml-1.5 flex h-5 items-center"><svg width="5" height="3" viewBox="0 0 5 3"><path d="M0 0H5L2.500 3Z" /></svg></button>
            <Divider className="ml-2" />
            <Grip className="ml-0.5" />
            <div className="ml-2.5 flex items-center">
                <Tool label="Web link 1"><Chrome size={14} /></Tool>
                <Tool label="Web link 2"><Chrome size={14} /></Tool>
                <Tool label="Web link 3"><Chrome size={14} /></Tool>
                <Tool label="Download"><DownloadIcon /></Tool>
                <Tool label="Download all"><DownloadIcon /></Tool>
                <Tool label="Window 1"><WindowIcon /></Tool>
                <Tool label="Window 2"><WindowIcon /></Tool>
                <Tool label="Window 3"><WindowIcon /></Tool>
            </div>
            <Divider className="ml-1" />
            <Grip className="ml-0.5" />
            <input aria-label="Symbol" defaultValue="XU100" className={clsx("ml-3 h-5 w-[63px] border border-t-[#696969] border-r-white border-b-white border-l-[#696969] bg-[#efefef] text-[11px]", arial)} />
            <Sep />
            <div className="relative ml-px flex w-20 items-center">
                <select aria-label="Account" className={drop}><option aria-label="None" value="" /></select>
                <Caret className="absolute right-1" />
            </div>
            <Sep />
            <div className="relative flex w-[150px] items-center">
                <select aria-label="Vendor" className={clsx(drop, arial)}><option>&lt;No Vendor&gt;</option></select>
                <Caret className="absolute right-1" />
            </div>
            <Sep />
            <button type="button" disabled className={clsx("ml-px h-5 w-16 rounded-sm border border-[#b5b9bd] bg-[#f3f3f3] text-[11px] text-[#8a8a8a]", arial)}>Trade</button>
            <Divider className="ml-1.5" />
        </div>
    );
}

function StatusBar() {
    return (
        <footer className="flex h-5 shrink-0 items-stretch border-t-2 border-t-white bg-[#f0eceb] text-[11px] leading-4 text-[#111]">
            <span className="flex flex-1 items-center pl-0.5">For Help, press F1</span>
            <span className="w-[57px] border-l border-[#d4d0cf]" />
            <span className="w-[71px] border-l border-[#d4d0cf]" />
            <span className="w-5 border-l border-[#d4d0cf]" />
            <span className="flex w-[43px] items-center justify-center border-l border-[#d4d0cf]">23:14</span>
            <span className="flex w-6 items-center justify-center border-l border-[#d4d0cf] text-xs font-bold text-[#008000]">$</span>
            <span className="flex w-9 items-center justify-center border-l border-[#d4d0cf]">NUM</span>
        </footer>
    );
}

const TASKS: { label: string; icon: ReactNode; state?: "open" | "active" }[] = [
    { label: "Internet Explorer", icon: <ExplorerIcon /> },
    { label: "Media Player", icon: <MediaIcon /> },
    { label: "Chrome", icon: <Chrome size={32} />, state: "open" },
    { label: "Calculator", icon: <CalcIcon /> },
    { label: "Word", icon: <WordIcon /> },
    { label: "Excel", icon: <ExcelIcon /> },
    { label: "Photoshop", icon: <PhotoshopIcon /> },
    { label: "Notepad", icon: <NotepadIcon /> },
    { label: "MetaStock", icon: <Bull width={32} height={37} />, state: "active" },
    { label: "Opera", icon: <OperaIcon /> },
    { label: "Paint", icon: <PaintIcon />, state: "open" },
];

function Dots() {
    return (
        <svg width="8" height="30" viewBox="0 0 8 30" className="shrink-0" shapeRendering="crispEdges" aria-hidden="true">
            <path d="M.5 0V30M3.500 0V30M6.500 0V30" stroke="#59636d" strokeDasharray="1 3" />
        </svg>
    );
}

function Tray() {
    return (
        <div className="ml-3 flex items-center">
            <Tool label="Utility">
                <Ico><path d="M0 0H16V16H0Z" fill="#3993dc" stroke="none" /><path d="M3.500 3V11.500H12.500V2.500H9.500V8M4 3.500H7V6M5 9.500L7 7.500M5 7.500L7 9.500M14.500 4V10" stroke="#eaf6ff" /><path d="M1 14.500H7" stroke="#f1c93d" /></Ico>
            </Tool>
            <Tool label="Bluetooth">
                <Ico smooth><ellipse cx="8" cy="8" rx="5.500" ry="7.500" fill="#0c4fa0" stroke="none" /><path d="M5 5.500L11 10.500L8 13V3L11 5.500L5 10.500" stroke="#fff" strokeWidth="1.200" /></Ico>
            </Tool>
            <Tool label="Disk">
                <Ico smooth><rect x="1" y="1" width="14" height="14" rx="2" fill="#b5b5b5" stroke="#ccc" /><circle cx="8" cy="7.500" r="5" fill="#ededed" stroke="#333" /><path d="M4 9.500Q8 13 12 9M4 6L7 8L11 5M8 4V6" stroke="#222" /></Ico>
            </Tool>
            <Tool label="Keyboard and mouse">
                <Ico><path d="M0 1H15V7H3Z" fill="#159b98" stroke="none" /><path d="M1 2.500H14M2 4.500H13" stroke="#7de0dc" strokeDasharray="1 1" /><path d="M8.500 6L11 4.500L14.500 7V15.500H11L8.500 11Z" fill="#d0d0d0" stroke="#666" /></Ico>
            </Tool>
            <Tool label="Action center">
                <Ico smooth><path d="M2.500 1V15" stroke="#fff" /><path d="M4 2L9 3L14 2V9L9 10L4 9Z" fill="#f2f2f2" stroke="none" /><circle cx="11" cy="11" r="4.500" fill="#dc2819" stroke="none" /><path d="M9 9L13 13M13 9L9 13" stroke="#fff" strokeWidth="1.500" /></Ico>
            </Tool>
            <Tool label="Power">
                <Ico stroke="#fff"><path d="M5 3H2.500V13.500H9.500V11" strokeWidth="1.500" /><path d="M4 1.500H8" /><path d="M8 4H14V8L12 10H10L8 8Z" fill="#fff" /><path d="M9.500 1V4M12.500 1V4M11.500 9V14" /></Ico>
            </Tool>
            <Tool label="Network">
                <Ico stroke="#fff"><path d="M2 12V14M5 10V14M8 8V14M11 6V14M14 3V14" strokeWidth="2" /></Ico>
            </Tool>
            <Tool label="Volume">
                <Ico smooth><path d="M1 5H4L8 1V14L4 11H1Z" fill="#f2f2f2" stroke="none" /><circle cx="11" cy="11" r="4" fill="#fff" stroke="#db2b1d" strokeWidth="2" /><path d="M8.500 8.500L13.500 13.500" stroke="#db2b1d" strokeWidth="2" /></Ico>
            </Tool>
        </div>
    );
}

function Taskbar() {
    return (
        <div className="flex h-10 shrink-0 items-center overflow-hidden border-t border-[#5d7185] bg-[linear-gradient(#3a4a5a_0,#1b2733_12%,#0d141c_35%,#05080c_100%)] text-white">
            <button type="button" aria-label="Start" className="ml-[7px]"><StartOrb /></button>
            <span className="ml-2.5 flex"><Dots /></span>
            <div className="ml-[9px] flex h-full items-center">
                {TASKS.map((t) => (
                    <button key={t.label} type="button" aria-label={t.label} className="flex h-full w-[62px] items-center justify-center px-0.5">
                        <span
                            className={clsx(
                                "flex h-[38px] w-full items-center justify-center rounded-xs",
                                t.state === "open" && "border border-[#85909a] bg-[linear-gradient(135deg,#7b8188,#4c5259_50%,#2b3137)]",
                                t.state === "active" && "border border-[#d4d8dc] bg-[linear-gradient(135deg,#d2d2d4,#9a9c9f_50%,#84868a)]",
                            )}
                        >
                            {t.icon}
                        </span>
                    </button>
                ))}
            </div>
            <span className="ml-auto flex"><Dots /></span>
            <button type="button" className="ml-2.5 pb-1.5 text-xs">TR</button>
            <Tray />
            <time className="w-20 text-center text-[11px] leading-[17px]">
                23:14
                <br />
                08.08.2018
            </time>
            <button type="button" aria-label="Show desktop" className="h-[38px] w-3.5 border border-[#59646e] bg-[linear-gradient(135deg,#5d6a75,#1a2128_50%)]" />
        </div>
    );
}

export default function App() {
    return (
        <div className={clsx("flex h-screen flex-col overflow-hidden bg-[#efefef]", ui)}>
            <TitleBar />
            <MenuBar />
            <MainToolbar />
            <main className="flex min-h-0 flex-1">
                <DrawingTools />
                <ChartWindow />
            </main>
            <BottomToolbar />
            <StatusBar />
            <Taskbar />
        </div>
    );
}
